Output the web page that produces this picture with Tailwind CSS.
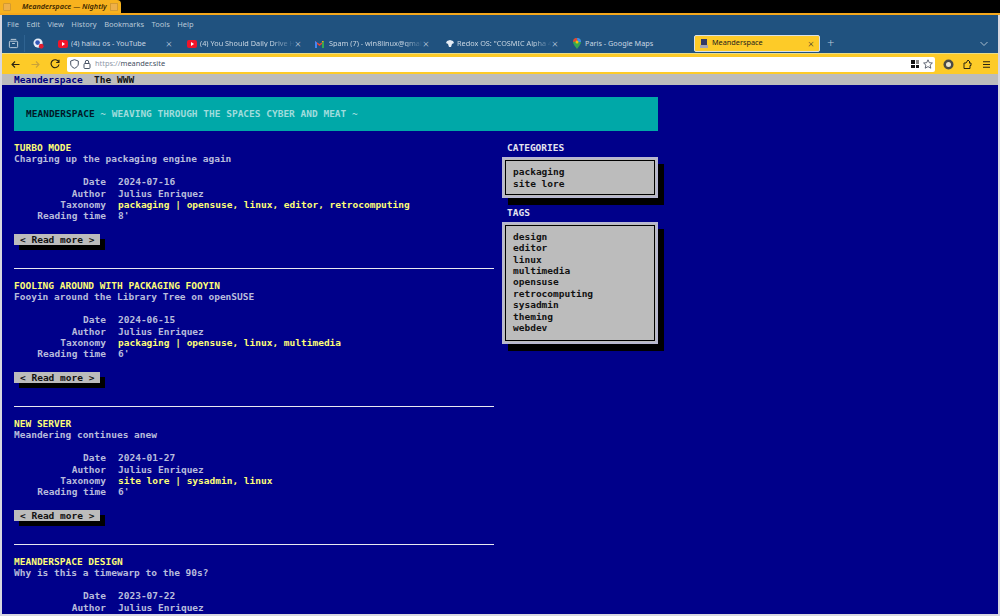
<!doctype html>
<html><head><meta charset="utf-8"><script src="https://cdn.jsdelivr.net/npm/@tailwindcss/browser@4"></script></head>
<body class="w-[1000px] h-[616px] overflow-hidden bg-black font-['Noto_Sans',sans-serif]">
<div class="h-[13px] bg-black flex"><div class="w-[121px] h-[13px] bg-[#f7b21e] flex items-center justify-between px-[3px] italic font-semibold text-[7.300px] leading-none text-[#3a2500] rounded-tr-sm whitespace-nowrap">
<div class="w-[8px] h-[8px] bg-[#eeb04a] border border-[#d49a30] rounded-[1px]"></div><span class="flex-1 pl-[11px]">Meanderspace — Nightly</span><div class="w-[8px] h-[8px] bg-[#eeb04a] border border-[#d49a30]"></div></div></div>
<div class="h-[2px] bg-[#f5a81c]"></div>
<div class="border-x-2 border-[#d8d8e0]">
<div class="h-[19px] bg-[#20527f] flex items-center gap-[7.500px] pl-[5px] pt-[1px] text-[7.500px] leading-none text-[#b9c9d8]">
<span>File</span><span>Edit</span><span>View</span><span>History</span><span>Bookmarks</span><span>Tools</span><span>Help</span>
</div>
<div class="h-[19px] bg-[#20527f] flex items-center text-[7.300px] leading-none text-[#c9d6e2] whitespace-nowrap">
<div class="w-[23px] flex justify-center border-r border-[#2f6391] h-[17px] items-center"><svg class="w-[11px] h-[11px]" viewBox="0 0 12 12" fill="none" stroke="#c9d6e2" stroke-width="1"><rect x="1.5" y="3.5" width="9" height="7" rx="1"/><path d="M3 1.5h6M4.5 6h3"/></svg></div>
<div class="w-[26px] flex justify-center"><svg class="w-[11px] h-[11px]" viewBox="0 0 12 12"><circle cx="5.5" cy="5.5" r="5" fill="#e8eef8"/><circle cx="5" cy="5" r="2.5" fill="#3557b7"/><circle cx="9" cy="9" r="2.6" fill="#e11d2e"/></svg></div>
<div class="w-[129px] flex items-center pl-[7px] pr-[8px]"><svg class="w-[10px] h-[8px] shrink-0" viewBox="0 0 10 8"><rect width="10" height="8" rx="2" fill="#f0142a"/><path d="M4 2l3 2-3 2z" fill="#fff"/></svg><span class="ml-[3px] flex-1 min-w-0 overflow-hidden">(4) haiku os - YouTube</span><span class="text-[11px] font-light">×</span></div>
<div class="w-[128px] flex items-center pl-[7px] pr-[7px]"><svg class="w-[10px] h-[8px] shrink-0" viewBox="0 0 10 8"><rect width="10" height="8" rx="2" fill="#f0142a"/><path d="M4 2l3 2-3 2z" fill="#fff"/></svg><span class="ml-[3px] flex-1 min-w-0 overflow-hidden [mask-image:linear-gradient(to_right,#000_75%,transparent)]">(4) You Should Daily Drive Haiku</span><span class="text-[11px] font-light">×</span></div>
<div class="w-[129px] flex items-center pl-[7px] pr-[8px]"><svg class="w-[9px] h-[8px] shrink-0" viewBox="0 0 9 8"><path d="M0 8V1l4.5 3L9 1v7H7V4L4.500 6 2 4v4z" fill="#ea4335"/><path d="M0 8V1l2 1.500V8z" fill="#4285f4"/><path d="M9 8V1L7 2.500V8z" fill="#34a853"/><path d="M9 1L7 2.500 7 1z" fill="#fbbc04"/></svg><span class="ml-[5px] flex-1 min-w-0 overflow-hidden [mask-image:linear-gradient(to_right,#000_80%,transparent)]">Spam (7) - win8linux@gmail.com</span><span class="text-[11px] font-light">×</span></div>
<div class="w-[129px] flex items-center pl-[9px] pr-[8px]"><svg class="w-[8px] h-[8px] shrink-0" viewBox="0 0 8 8"><path d="M1 1l3-1 3 1 1 2-2 1-1 3H3L2 4 0 3z" fill="#e6edf5"/></svg><span class="ml-[3px] flex-1 min-w-0 overflow-hidden [mask-image:linear-gradient(to_right,#000_80%,transparent)]">Redox OS: "COSMIC Alpha 4 Release"</span><span class="text-[11px] font-light">×</span></div>
<div class="w-[128px] flex items-center pl-[7px]"><svg class="w-[8px] h-[11px] shrink-0" viewBox="0 0 8 11"><path d="M4 11C2 8 0 6 0 4a4 4 0 0 1 8 0c0 2-2 4-4 7z" fill="#34a853"/><path d="M0 4a4 4 0 0 1 4-4v3z" fill="#ea4335"/><path d="M4 0a4 4 0 0 1 4 4H5z" fill="#4285f4"/><circle cx="4" cy="4" r="1.500" fill="#fbbc04"/></svg><span class="ml-[4px]">Paris - Google Maps</span></div>
<div class="w-[126px] h-[17px] mt-[-1px] bg-[#fdcb28] border border-[#d9e0e6] rounded-[2px] flex items-center pl-[5px] pr-[5px] text-[#1c1c1c]"><svg class="w-[8px] h-[9px] shrink-0" viewBox="0 0 8 9"><rect x="1" y="0" width="6" height="6" fill="#333a66"/><rect y="6" width="8" height="3" fill="#a6a6b0"/></svg><span class="ml-[4px] flex-1">Meanderspace</span><span class="text-[11px] font-light text-[#333]">×</span></div>
<span class="ml-[7px] text-[13px] font-light text-[#b9c9d8]">+</span>
<svg class="w-[8px] h-[6px] ml-[146px]" viewBox="0 0 8 6" fill="none" stroke="#a9bccd"><path d="M0.500 1l3.500 3.500L7.500 1"/></svg>
</div>
<div class="h-[21px] bg-[#fdcb28] flex items-center border-t border-[#e9dd88]">
<svg class="w-[9px] h-[9px] ml-[9px] shrink-0" viewBox="0 0 9 9" fill="none" stroke="#2b2413" stroke-width="1.100"><path d="M8.500 4.500H1M4 1.500l-3 3 3 3"/></svg>
<svg class="w-[9px] h-[9px] ml-[11px] shrink-0" viewBox="0 0 9 9" fill="none" stroke="#c8a23a" stroke-width="1.100"><path d="M.5 4.500H8M5 1.500l3 3-3 3"/></svg>
<svg class="w-[10px] h-[10px] ml-[10px] shrink-0" viewBox="0 0 10 10" fill="none" stroke="#2b2413" stroke-width="1.100"><path d="M8.700 3A4 4 0 1 0 9 5.500M9 .7V3.500H6.200"/></svg>
<div class="ml-[7px] flex-1 h-[15px] bg-white rounded-[2px] flex items-center pl-[3px] pr-[2px] text-[7.400px] leading-none">
<svg class="w-[9px] h-[10px]" viewBox="0 0 9 10" fill="none" stroke="#4a5566"><path d="M4.500.7L8.300 2v3c0 2-1.700 3.400-3.800 4.300C2.400 8.400.7 7 .7 5V2z"/></svg>
<svg class="w-[8px] h-[10px] ml-[4px]" viewBox="0 0 8 10" fill="none" stroke="#4a5566"><rect x="1" y="4.500" width="6" height="5" rx="1"/><path d="M2.300 4.500V3a1.700 1.700 0 0 1 3.400 0v1.500"/></svg>
<span class="ml-[4px] text-[#8e98a8]">https://</span><span class="text-[#454f62]">meander.site</span>
<div class="ml-auto grid grid-cols-2 gap-[1px] w-[8px] h-[8px]"><i class="bg-[#111]"></i><i class="bg-[#888]"></i><i class="bg-[#111]"></i><i class="bg-[#111]"></i></div>
<svg class="w-[10px] h-[10px] ml-[4px]" viewBox="0 0 10 10" fill="none" stroke="#3c4454" stroke-width=".8"><path d="M5 .8l1.300 2.900 3.100.3-2.300 2.100.7 3.100L5 7.600 2.200 9.200l.7-3.100L.6 4l3.100-.3z"/></svg>
</div>
<svg class="w-[11px] h-[11px] ml-[8px] shrink-0" viewBox="0 0 11 11"><circle cx="5.500" cy="5.500" r="5" fill="#4b4a45"/><circle cx="5.500" cy="5.500" r="2.500" fill="#e8e2cf"/></svg>
<svg class="w-[10px] h-[10px] ml-[9px] shrink-0" viewBox="0 0 10 10" fill="none" stroke="#2b2413" stroke-width="1"><path d="M1 9.500V4h2l2-3 2 2-1 1h2v2.500H7V9.500z"/></svg>
<svg class="w-[9px] h-[7px] ml-[9px] mr-[7px] shrink-0" viewBox="0 0 9 7" fill="none" stroke="#2b2413" stroke-width="1.100"><path d="M1 .8h7M1 3.500h7M1 6.200h7"/></svg>
</div>
<div class="h-[11px] bg-[#bcbcbc] font-['DejaVu_Sans_Mono',monospace] font-bold text-[9.5px] leading-[11px] pl-[12px] whitespace-pre"><span class="text-[#000080]">Meanderspace</span>  <span class="text-[#111]">The WWW</span></div>
</div>
<div class="h-[531px] bg-[#00008a] border-x-2 border-b-2 border-[#d8d8e0] overflow-hidden pl-[12px] pt-[12px] font-['DejaVu_Sans_Mono',monospace] font-bold text-[9.5px] leading-[11.4px] text-[#b8bcdc]">
<div class="w-[644px] h-[34px] bg-[#00a8a8] flex items-center pl-[12px] text-[#9fdcdc] whitespace-pre"><span class="text-[#001828]">MEANDERSPACE</span> ~ WEAVING THROUGH THE SPACES CYBER AND MEAT ~</div>
<div class="flex mt-[11px]">
<main class="w-[480px]">

<article class="h-[138px]">
<h2 class="text-[#fdfd78]">TURBO MODE</h2><p>Charging up the packaging engine again</p>
<dl class="mt-[11.400px] grid grid-cols-[92px_1fr] gap-x-[12px]"><dt class="text-right">Date</dt><dd>2024-07-16</dd><dt class="text-right">Author</dt><dd>Julius Enriquez</dd><dt class="text-right">Taxonomy</dt><dd class="text-[#fdfd78]">packaging | opensuse, linux, editor, retrocomputing</dd><dt class="text-right">Reading time</dt><dd>8'</dd></dl>
<a class="block w-[86px] h-[11px] mt-[12.400px] bg-[#bcbcbc] text-[#111] pl-[6px] leading-[11px] shadow-[5px_5px_0_#000] whitespace-pre">&lt; Read more &gt;</a>
<div class="mt-[23px] h-[1px] bg-[#e8e8f0]"></div>
</article>

<article class="h-[138px]">
<h2 class="text-[#fdfd78]">FOOLING AROUND WITH PACKAGING FOOYIN</h2><p>Fooyin around the Library Tree on openSUSE</p>
<dl class="mt-[11.400px] grid grid-cols-[92px_1fr] gap-x-[12px]"><dt class="text-right">Date</dt><dd>2024-06-15</dd><dt class="text-right">Author</dt><dd>Julius Enriquez</dd><dt class="text-right">Taxonomy</dt><dd class="text-[#fdfd78]">packaging | opensuse, linux, multimedia</dd><dt class="text-right">Reading time</dt><dd>6'</dd></dl>
<a class="block w-[86px] h-[11px] mt-[12.400px] bg-[#bcbcbc] text-[#111] pl-[6px] leading-[11px] shadow-[5px_5px_0_#000] whitespace-pre">&lt; Read more &gt;</a>
<div class="mt-[23px] h-[1px] bg-[#e8e8f0]"></div>
</article>

<article class="h-[138px]">
<h2 class="text-[#fdfd78]">NEW SERVER</h2><p>Meandering continues anew</p>
<dl class="mt-[11.400px] grid grid-cols-[92px_1fr] gap-x-[12px]"><dt class="text-right">Date</dt><dd>2024-01-27</dd><dt class="text-right">Author</dt><dd>Julius Enriquez</dd><dt class="text-right">Taxonomy</dt><dd class="text-[#fdfd78]">site lore | sysadmin, linux</dd><dt class="text-right">Reading time</dt><dd>6'</dd></dl>
<a class="block w-[86px] h-[11px] mt-[12.400px] bg-[#bcbcbc] text-[#111] pl-[6px] leading-[11px] shadow-[5px_5px_0_#000] whitespace-pre">&lt; Read more &gt;</a>
<div class="mt-[23px] h-[1px] bg-[#e8e8f0]"></div>
</article>

<article>
<h2 class="text-[#fdfd78]">MEANDERSPACE DESIGN</h2><p>Why is this a timewarp to the 90s?</p>
<dl class="mt-[11.400px] grid grid-cols-[92px_1fr] gap-x-[12px]"><dt class="text-right">Date</dt><dd>2023-07-22</dd><dt class="text-right">Author</dt><dd>Julius Enriquez</dd></dl>
</article>
</main>
<aside class="ml-[8px] w-[156px]">
<h3 class="pl-[5px] text-[#e4e4f0]">CATEGORIES</h3>
<div class="mt-[4px] h-[41px] bg-[#bcbcbc] border-2 border-[#bcbcbc] outline outline-[2px] -outline-offset-[2px] outline-[#b8b8d0] shadow-[6px_7px_0_#000] p-[1px]"><div class="h-full border border-black pl-[7px] pt-[5px] text-[#111]"><p>packaging</p><p>site lore</p></div></div>
<h3 class="mt-[9px] pl-[5px] text-[#e4e4f0]">TAGS</h3>
<div class="mt-[3px] h-[122px] bg-[#bcbcbc] border-2 border-[#bcbcbc] outline outline-[2px] -outline-offset-[2px] outline-[#b8b8d0] shadow-[6px_7px_0_#000] p-[1px]"><div class="h-full border border-black pl-[7px] pt-[5px] text-[#111]"><p>design</p><p>editor</p><p>linux</p><p>multimedia</p><p>opensuse</p><p>retrocomputing</p><p>sysadmin</p><p>theming</p><p>webdev</p></div></div>
</aside>
</div>
</div>
</body></html>
